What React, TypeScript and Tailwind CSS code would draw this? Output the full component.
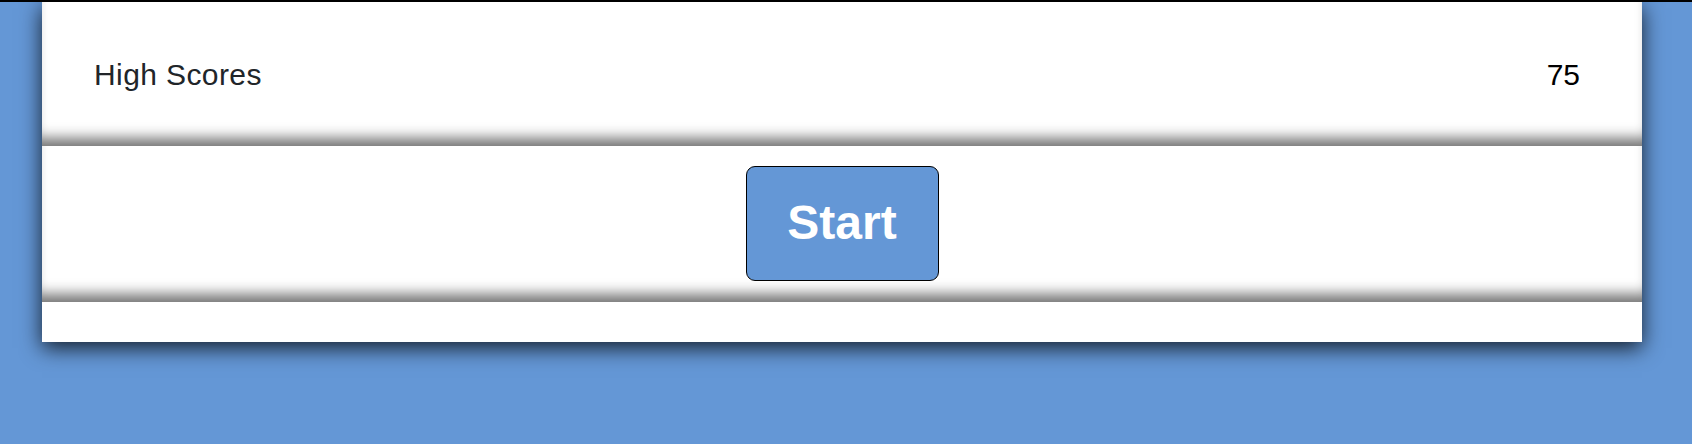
export default function App() {
  return (
    <div
      className="min-h-screen w-full bg-[#6497d6] border-t-2 border-black overflow-hidden"
      style={{ fontFamily: '"Liberation Sans", Arial, sans-serif' }}
    >
      <div className="ml-[42px] w-[1600px] bg-white shadow-[0_6px_20px_rgba(0,0,0,0.8)]">
        {/* Score row */}
        <div className="h-[144px] flex items-center justify-between pl-[52px] pr-[62px] shadow-[inset_0_-16px_14px_-8px_rgba(0,0,0,0.55)]">
          <span className="text-[30px] text-[#212529] tracking-[0.4px]">High Scores</span>
          <span className="text-[30px] text-black">75</span>
        </div>

        {/* Start */}
        <div className="h-[156px] flex items-center justify-center shadow-[inset_0_-16px_14px_-8px_rgba(0,0,0,0.55)]">
          <button className="w-[193px] h-[115px] mb-[2px] rounded-[9px] border-[1.5px] border-black bg-[#6497d6] text-white font-bold text-[48px]">
            Start
          </button>
        </div>

        <div className="h-[40px]" />
      </div>
    </div>
  );
}
